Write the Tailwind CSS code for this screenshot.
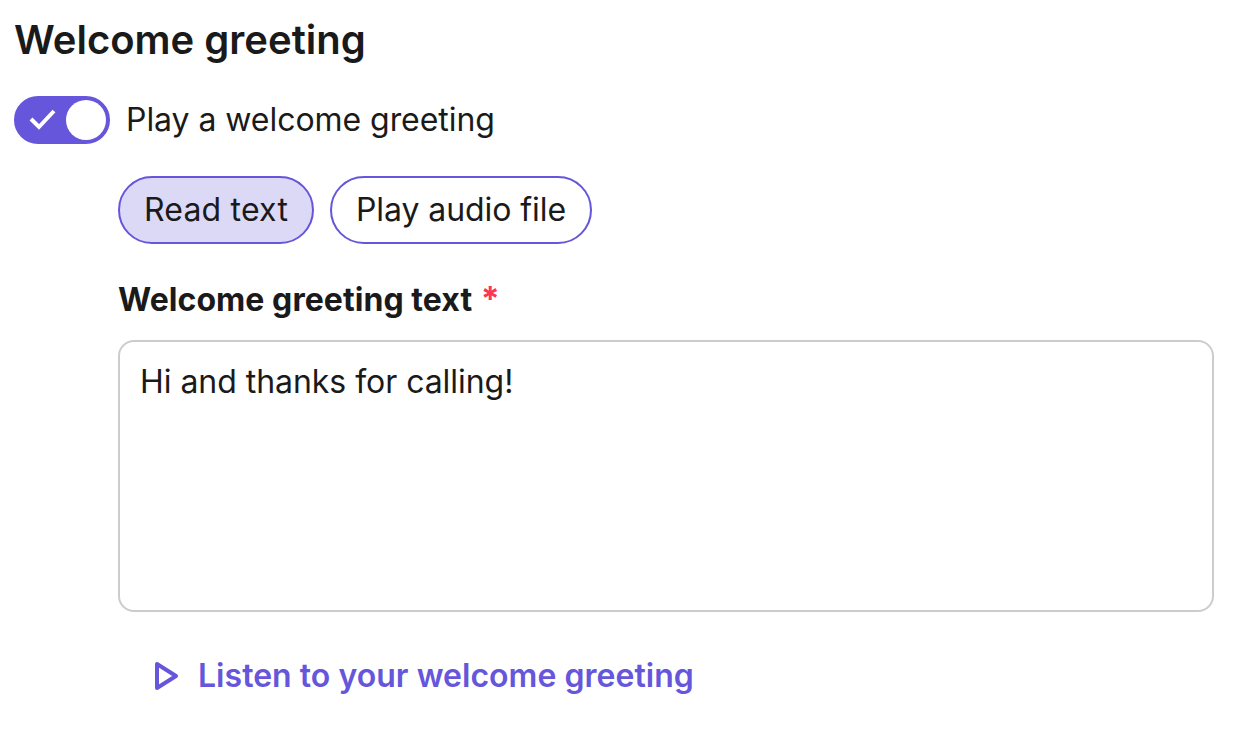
<!doctype html>
<html><head><meta charset="utf-8"><script src="https://cdn.jsdelivr.net/npm/@tailwindcss/browser@4"></script></head>
<body class="bg-white text-[#1a1a1a] font-['Inter',sans-serif] antialiased w-[1240px] h-[730px] overflow-hidden">
<div class="pl-[14px] pr-[26px] pt-[16px]">
<h1 class="text-[40px] leading-[48px] font-semibold">Welcome greeting</h1>
<div class="flex items-center gap-[16px] mt-[32px] h-[48px]">
<div class="w-[96px] h-[48px] rounded-full bg-[#6556db] border-[4px] border-[#6556db] flex items-center justify-between pl-[11px]">
<svg class="w-[28px] h-[28px]" viewBox="0 0 28 28" fill="none" stroke="#fff" stroke-width="4" stroke-linejoin="miter"><path d="M2 13l8 8L25 5"/></svg>
<div class="w-[40px] h-[40px] rounded-full bg-white"></div>
</div>
<span class="text-[32px] leading-[48px] tracking-[-0.05px]">Play a welcome greeting</span>
</div>
<div class="pl-[104px]">
<div class="flex gap-[16px] mt-[32px]">
<div class="h-[68px] w-[196px] rounded-full border-2 border-[#6556db] bg-[#dcd9f7] flex items-center justify-center text-[32px] tracking-[0.2px]">Read text</div>
<div class="h-[68px] w-[262px] rounded-full border-2 border-[#6556db] bg-white flex items-center justify-center text-[32px] tracking-[-0.07px]">Play audio file</div>
</div>
<div class="mt-[36px] h-[40px] text-[32px] leading-[40px] font-bold tracking-[0.06px]">Welcome greeting text <span class="text-[#ff3355] ml-[1px] text-[34px] leading-[0]">*</span></div>
<div class="mt-[20px] h-[272px] rounded-[16px] border-2 border-[#cccccc] px-[20px] py-[18px] text-[32px] leading-[44px] tracking-[-0.04px]">Hi and thanks for calling!</div>
<div class="flex items-center gap-[18px] mt-[40px] pl-[34px] text-[#6556db] text-[32px] leading-[48px] font-semibold tracking-[0.03px]">
<svg class="w-[28px] h-[32px]" viewBox="0 0 28 32" fill="none" stroke="#6556db" stroke-width="4" stroke-linejoin="round"><path d="M5 4v24l19-12z"/></svg>
<span>Listen to your welcome greeting</span>
</div>
</div>
</div>
</body></html>
